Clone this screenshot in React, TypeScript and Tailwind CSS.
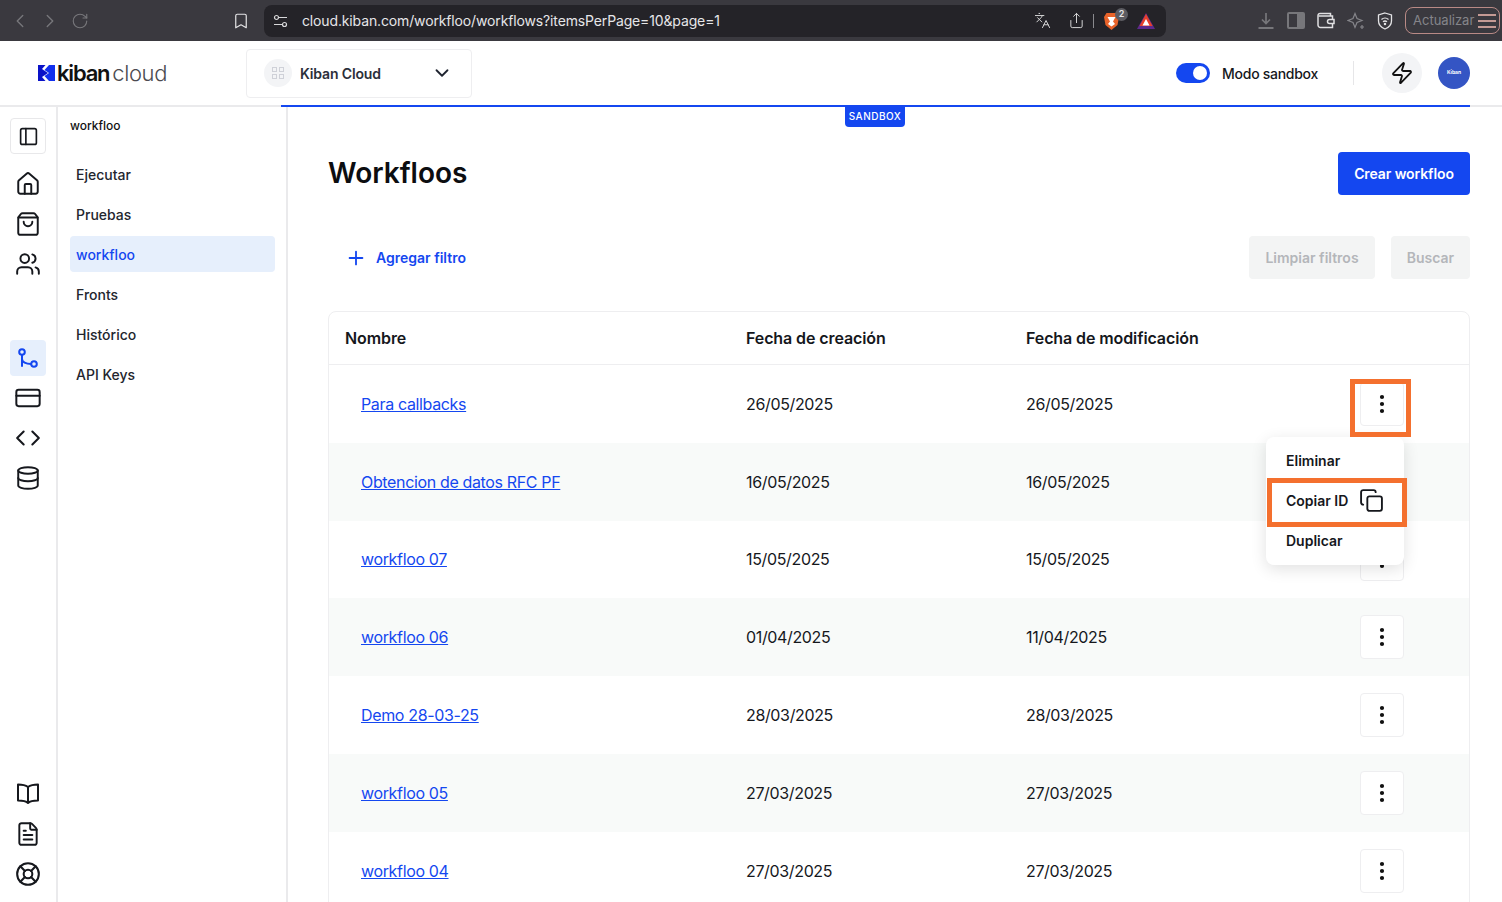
import React from 'react';
import {
  Bookmark,
  ChevronDown,
  ChevronLeft,
  ChevronRight,
  Code,
  Copy,
  CreditCard,
  Database,
  FileText,
  House,
  Languages,
  LifeBuoy,
  MoreVertical,
  PanelLeft,
  Plus,
  RotateCw,
  Share,
  ShoppingBag,
  Users,
  Zap,
} from 'lucide-react';

const subNav = ['Ejecutar', 'Pruebas', 'workfloo', 'Fronts', 'Histórico', 'API Keys'];

const rows = [
  { name: 'Para callbacks', created: '26/05/2025', modified: '26/05/2025' },
  { name: 'Obtencion de datos RFC PF', created: '16/05/2025', modified: '16/05/2025' },
  { name: 'workfloo 07', created: '15/05/2025', modified: '15/05/2025' },
  { name: 'workfloo 06', created: '01/04/2025', modified: '11/04/2025' },
  { name: 'Demo 28-03-25', created: '28/03/2025', modified: '28/03/2025' },
  { name: 'workfloo 05', created: '27/03/2025', modified: '27/03/2025' },
  { name: 'workfloo 04', created: '27/03/2025', modified: '27/03/2025' },
];

const BrowserBar = () => (
  <div className="flex h-[41px] items-center bg-[#3a393f] pl-[9px] font-['Inter',sans-serif]">
    <ChevronLeft size={22} strokeWidth={1.5} className="text-[#77777b]" />
    <ChevronRight size={22} strokeWidth={1.5} className="ml-[8px] text-[#77777b]" />
    <RotateCw size={18} strokeWidth={1.5} className="ml-[10px] text-[#77777b]" />
    <Bookmark size={18} strokeWidth={1.6} className="ml-[143px] text-[#e4e4e6]" />
    <div className="ml-[14px] flex h-[32px] w-[902px] items-center rounded-[8px] bg-[#242328] pl-[9px] pr-[11px]">
      <svg width="15" height="14" viewBox="0 0 15 14" fill="none" stroke="#d8d8da" strokeWidth="1.2">
        <circle cx="3.5" cy="3.5" r="2" />
        <path d="M6 3.5h8M1 10.5h8" />
        <circle cx="11.5" cy="10.5" r="2" />
      </svg>
      <span className="ml-[14px] text-[14px] tracking-[-0.14px] text-[#e6e6e8]">cloud.kiban.com/workfloo/workflows?itemsPerPage=10&amp;page=1</span>
      <Languages size={17} strokeWidth={1.4} className="ml-auto text-[#d4d4d6]" />
      <Share size={17} strokeWidth={1.4} className="ml-[17px] text-[#d4d4d6]" />
      <div className="ml-[8px] h-[14px] w-px bg-[#8a8a8e]" />
      <div className="relative ml-[10px]">
        <svg width="15" height="18" viewBox="0 0 15 18">
          <path d="M2.500 1h10L15 5l-1.500 8L7.500 18 1.500 13 0 5z" fill="#e8632a" />
          <path d="M3.500 5h8L9 9.500l2 2.500-3.500 2.500L4 12l2-2.500z" fill="#fff" />
        </svg>
        <span className="absolute -right-[9px] -top-[4px] flex h-[13px] w-[13px] items-center justify-center rounded-full bg-[#5c5c62] text-[9px] font-semibold text-[#e8e8ea]">2</span>
      </div>
      <svg width="18" height="16" viewBox="0 0 18 16" className="ml-[18px]">
        <path d="M9 0l9 16H0z" fill="#5d2a8c" />
        <path d="M9 1l6.500 12h-13z" fill="#e8402a" />
        <path d="M9 6l3.500 6.500h-7z" fill="#fff" />
      </svg>
    </div>
    <svg width="18" height="18" viewBox="0 0 18 18" fill="none" stroke="#77777b" strokeWidth="1.7" className="ml-[91px]">
      <path d="M9 1v10M5 7.500L9 11.500l4-4" />
      <path d="M1.500 16h15" strokeWidth="2" />
    </svg>
    <div className="ml-[12px] flex h-[17px] w-[18px] overflow-hidden rounded-[2px] border-2 border-[#77777b]">
      <div className="flex-1" />
      <div className="w-[6px] bg-[#77777b]" />
    </div>
    <svg width="18" height="17" viewBox="0 0 18 17" fill="none" stroke="#e0e0e2" strokeWidth="1.5" className="ml-[12px]">
      <path d="M13.500 4V1.500H3A2 2 0 0 0 1 3.500V13a2.500 2.500 0 0 0 2.500 2.500h12V12" />
      <path d="M1.500 4h14v3.500" />
      <path d="M17 7.500h-4.500a2 2 0 0 0 0 4H17z" />
    </svg>
    <svg width="18" height="18" viewBox="0 0 18 18" fill="none" stroke="#85858a" strokeWidth="1.2" className="ml-[12px]">
      <path d="M8 1.500l2 5 5 2-5 2-2 5-2-5-5-2 5-2z" />
      <path d="M15 13v4M13 15h4" />
    </svg>
    <div className="relative ml-[12px] flex h-[18px] w-[16px] items-center justify-center">
      <svg width="16" height="18" viewBox="0 0 16 18" fill="none" stroke="#e4e4e6" strokeWidth="1.3" className="absolute inset-0">
        <path d="M8 1l6.500 2v6c0 4-3 6.500-6.500 8-3.500-1.500-6.500-4-6.500-8V3z" />
        <path d="M4.500 7.500c2-1.800 5-1.800 7 0M6 9.800c1.200-1 2.800-1 4 0" />
        <circle cx="8" cy="12" r="0.6" />
      </svg>
    </div>
    <div className="ml-[12px] flex h-[27px] w-[95px] shrink-0 items-center rounded-[8px] border border-[#b98a86] pl-[7px]">
      <span className="text-[13px] text-[#85858a]">Actualizar</span>
      <div className="ml-[4px] flex w-[18px] flex-col gap-[4px]">
        <div className="h-[2px] bg-[#c49a94]" />
        <div className="h-[2px] bg-[#c49a94]" />
        <div className="h-[2px] bg-[#c49a94]" />
      </div>
    </div>
  </div>
);

const Header = () => (
  <header className="flex h-[66px] items-center border-b-2 border-[#eaeaec] bg-white pl-[38px]">
    <svg width="17" height="16" viewBox="0 0 17 16">
      <path d="M0 0h7.500L4 4 10 8 4 12l3.500 4H0z" fill="#0a12c8" />
      <path d="M11 0h6v16h-6L6.500 11 11 8 6.500 5z" fill="#1230ee" />
    </svg>
    <span className="ml-[2px] text-[22px] font-semibold leading-none tracking-[-1.2px] text-[#111]">kiban</span>
    <span className="ml-[3px] text-[22px] font-light leading-none tracking-[-0.4px] text-[#4b4b50]">cloud</span>
    <div className="ml-[79px] flex h-[49px] w-[226px] items-center rounded-[4px] border border-[#eeeef0] pl-[17px] pr-[18px]">
      <div className="flex h-[28px] w-[28px] items-center justify-center rounded-full bg-[#f3f4f6]">
        <div className="grid grid-cols-2 gap-[2px]">
          <div className="h-[5px] w-[5px] border border-[#cfd1d8]" />
          <div className="h-[5px] w-[5px] border border-[#cfd1d8]" />
          <div className="h-[5px] w-[5px] border border-[#cfd1d8]" />
          <div className="h-[5px] w-[5px] border border-[#cfd1d8]" />
        </div>
      </div>
      <span className="ml-[8px] text-[14px] font-semibold tracking-[-0.15px] text-[#2b2f3a]">Kiban Cloud</span>
      <ChevronDown size={22} strokeWidth={2} className="ml-auto text-[#1f2430]" />
    </div>
    <div className="ml-auto flex items-center pr-[32px]">
      <div className="flex h-[20px] w-[34px] items-center justify-end rounded-full bg-[#1447f0] pr-[3px]">
        <div className="h-[14px] w-[14px] rounded-full bg-white" />
      </div>
      <span className="ml-[12px] text-[14px] font-medium tracking-[-0.28px] text-[#15171c]">Modo sandbox</span>
      <div className="ml-[35px] h-[24px] w-px bg-[#e6e6e8]" />
      <div className="ml-[28px] flex h-[40px] w-[40px] items-center justify-center rounded-full bg-[#f3f4f6]">
        <Zap size={24} strokeWidth={1.8} className="text-[#111]" />
      </div>
      <div className="ml-[16px] flex h-[32px] w-[32px] items-center justify-center rounded-full bg-[#3455c4]">
        <span className="text-[5px] font-bold text-white">Kiban</span>
      </div>
    </div>
  </header>
);

const RailIcon = ({ children, active }: { children: React.ReactNode; active?: boolean }) => (
  <div className={`flex h-[36px] w-[36px] items-center justify-center rounded-[4px] ${active ? 'bg-[#e6effc]' : ''}`}>
    {children}
  </div>
);

const Rail = () => (
  <aside className="flex w-[58px] shrink-0 flex-col items-center border-r-2 border-[#eaeaec] pb-[10px] pt-[11px] text-[#16181d]">
    <div className="flex h-[36px] w-[36px] items-center justify-center rounded-[4px] border border-[#e8e8ea]">
      <PanelLeft size={21} strokeWidth={1.9} />
    </div>
    <div className="mt-[12px] flex flex-col gap-[4px]">
      <RailIcon><House size={26} strokeWidth={1.8} /></RailIcon>
      <RailIcon><ShoppingBag size={26} strokeWidth={1.8} /></RailIcon>
      <RailIcon><Users size={26} strokeWidth={1.8} /></RailIcon>
    </div>
    <div className="mt-[58px] flex flex-col gap-[4px]">
      <RailIcon active>
        <svg width="22" height="24" viewBox="0 0 22 24" fill="none" stroke="#1447f0" strokeWidth="2" strokeLinecap="round">
          <circle cx="5" cy="6" r="2.800" />
          <path d="M5 9v11" />
          <path d="M5 13c0 3 4 5 9 5" />
          <circle cx="17" cy="18" r="2.800" />
        </svg>
      </RailIcon>
      <RailIcon><CreditCard size={28} strokeWidth={1.7} /></RailIcon>
      <RailIcon><Code size={26} strokeWidth={1.9} /></RailIcon>
      <RailIcon><Database size={26} strokeWidth={1.8} /></RailIcon>
    </div>
    <div className="mt-auto flex flex-col gap-[4px]">
      <RailIcon>
        <svg width="24" height="22" viewBox="0 0 24 22" fill="none" stroke="currentColor" strokeWidth="2" strokeLinejoin="round">
          <path d="M12 4C10 2.500 6 1.500 2 1.500V17.500c4 0 8 .5 10 2.500 2-2 6-2.500 10-2.500V1.500C18 1.500 14 2.500 12 4z" />
          <path d="M12 4v16" />
        </svg>
      </RailIcon>
      <RailIcon><FileText size={26} strokeWidth={1.8} /></RailIcon>
      <RailIcon><LifeBuoy size={26} strokeWidth={1.9} /></RailIcon>
    </div>
  </aside>
);

const SubNav = () => (
  <aside className="w-[230px] shrink-0 border-r-2 border-[#eaeaec] pl-[12px] pr-[11px] pt-[11px]">
    <div className="text-[12px] font-medium leading-[16px] text-[#111]">workfloo</div>
    <nav className="mt-[22px] flex flex-col gap-[4px]">
      {subNav.map((item) => (
        <div
          key={item}
          className={`flex h-[36px] items-center rounded-[4px] pl-[6px] text-[14px] font-medium ${
            item === 'workfloo' ? 'bg-[#e6effc] text-[#1447f0]' : 'text-[#23262e]'
          }`}
        >
          {item}
        </div>
      ))}
    </nav>
  </aside>
);

const Table = () => (
  <div className="mt-[32px] rounded-t-[8px] border border-[#eeeef0]">
    <div className="grid h-[53px] grid-cols-[401px_280px_1fr] items-center border-b border-[#eeeef0] pl-[16px] text-[16px] font-semibold tracking-[-0.1px] text-[#15171c]">
      <span>Nombre</span>
      <span>Fecha de creación</span>
      <span>Fecha de modificación</span>
    </div>
    {rows.map((row, i) => (
      <div
        key={row.name}
        className={`grid h-[77.800px] grid-cols-[385px_280px_1fr_44px] items-center pl-[32px] pr-[65px] text-[16px] tracking-[-0.35px] text-[#15171c] ${
          i % 2 === 1 ? 'bg-[#f8faf9]' : 'bg-white'
        }`}
      >
        <a className="text-[#1447f0] underline">{row.name}</a>
        <span>{row.created}</span>
        <span>{row.modified}</span>
        <div className="flex h-[44px] w-[44px] items-center justify-center rounded-[4px] border border-[#eeeef0] bg-white">
          <MoreVertical size={24} strokeWidth={2.2} className="text-[#111]" />
        </div>
      </div>
    ))}
  </div>
);

const Menu = () => (
  <div className="absolute left-[978px] top-[330px] z-10 w-[138px] rounded-[8px] bg-white pb-[5px] pt-[3px] text-[14px] font-semibold text-[#15171c] shadow-[0_4px_16px_rgba(0,0,0,0.12)]">
    <div className="flex h-[40px] items-center pl-[20px]">Eliminar</div>
    <div className="flex h-[40px] items-center pl-[20px]">
      Copiar ID
      <Copy size={25} strokeWidth={1.8} className="ml-[11px]" />
    </div>
    <div className="flex h-[40px] items-center pl-[20px]">Duplicar</div>
  </div>
);

export default function App() {
  return (
    <div className="flex h-[902px] flex-col overflow-hidden bg-white font-['Inter',sans-serif]">
      <BrowserBar />
      <Header />
      <div className="flex min-h-0 flex-1">
        <Rail />
        <SubNav />
        <main className="relative flex-1 pl-[40px] pr-[32px]">
          <div className="absolute -left-[7px] right-[32px] -top-[2px] h-[2px] bg-[#1447f0]" />
          <div className="absolute left-[557px] top-0 flex h-[20px] w-[60px] items-center justify-center rounded-b-[4px] bg-[#1447f0] pb-px text-[10px] font-medium tracking-[0.5px] text-white">
            SANDBOX
          </div>
          <div className="flex items-center justify-between pt-[45px]">
            <h1 className="text-[28px] font-semibold leading-[43px] text-[#0c0d10]">Workfloos</h1>
            <button className="h-[43px] w-[132px] rounded-[4px] bg-[#1447f0] text-[14px] font-semibold tracking-[-0.1px] text-white">Crear workfloo</button>
          </div>
          <div className="mt-[41px] flex h-[43px] items-center pl-[17px]">
            <Plus size={22} strokeWidth={2} className="text-[#1447f0]" />
            <span className="ml-[9px] text-[14px] font-semibold text-[#1447f0]">Agregar filtro</span>
            <button className="ml-auto h-[43px] w-[126px] rounded-[4px] bg-[#f3f4f4] text-[14px] font-semibold text-[#b4b6ba]">Limpiar filtros</button>
            <button className="ml-[16px] h-[43px] w-[79px] rounded-[4px] bg-[#f3f4f4] text-[14px] font-semibold text-[#b4b6ba]">Buscar</button>
          </div>
          <Table />
          <Menu />
          <div className="absolute left-[1062px] top-[272px] z-20 h-[58px] w-[61px] border-[5px] border-[#f4702e]" />
          <div className="absolute left-[979px] top-[371px] z-20 h-[49px] w-[140px] border-[5px] border-[#f4702e]" />
        </main>
      </div>
    </div>
  );
}
